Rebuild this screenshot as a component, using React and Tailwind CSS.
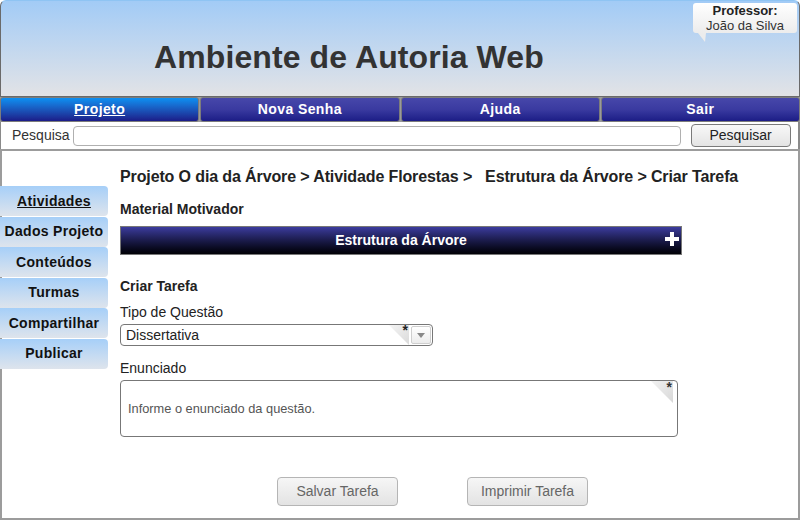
import React from 'react';

const menuTabs = [
  { label: 'Projeto', active: true },
  { label: 'Nova Senha' },
  { label: 'Ajuda' },
  { label: 'Sair' },
];

const sideItems = [
  { label: 'Atividades', active: true },
  { label: 'Dados Projeto' },
  { label: 'Conteúdos' },
  { label: 'Turmas' },
  { label: 'Compartilhar' },
  { label: 'Publicar' },
];

function Requerido() {
  // canto dobrado com asterisco de campo obrigatório
  return (
    <div className="absolute top-0 right-[4px] w-[22px] h-[22px] pointer-events-none">
      <svg width="22" height="22" viewBox="0 0 22 22" className="absolute inset-0">
        <defs>
          <linearGradient id="dobra" x1="0" y1="0" x2="1" y2="1">
            <stop offset="0" stopColor="#f2f2f2" />
            <stop offset="1" stopColor="#d8d8d8" />
          </linearGradient>
        </defs>
        <polygon points="0,0 22,0 22,22" fill="url(#dobra)" />
      </svg>
      <span className="absolute right-[1px] top-[-1px] text-[14px] font-bold text-[#333] leading-none">*</span>
    </div>
  );
}

export default function App() {
  return (
    <div className="w-[800px] h-[520px] bg-white font-['Liberation_Sans',Arial,sans-serif] text-[#222] overflow-hidden">
      {/* cabeçalho */}
      <div className="relative h-[97px] rounded-t-[6px] border border-[#6a6a6a] border-t-[#8fc4f3] bg-gradient-to-b from-[#a2cbf6] to-[#e2e3e6]">
        <h1 className="pl-[153px] pt-[38px] text-[32px] leading-[36px] font-bold text-[#333] tracking-[0.1px]">
          Ambiente de Autoria Web
        </h1>
        <div className="absolute top-[2px] right-[2px] w-[104px] h-[30px] rounded-[3px] bg-gradient-to-b from-white to-[#ececec] text-center text-[13px] leading-[15px]">
          <div className="font-bold">Professor:</div>
          <div className="text-[#333]">João da Silva</div>
          <svg width="8" height="9" viewBox="0 0 8 9" className="absolute left-[5px] top-[30px]">
            <polygon points="0,0 8,0 7,9" fill="#ececec" />
          </svg>
        </div>
      </div>

      {/* menu principal */}
      <div className="flex gap-px h-[25px] bg-[#9a9a9a]">
        {menuTabs.map((t) => (
          <div
            key={t.label}
            className={`flex-1 flex items-center justify-center rounded-[3px] border border-[#7c7c7c] text-white text-[14px] font-bold tracking-[0.4px] ${
              t.active
                ? 'bg-gradient-to-b from-[#0b90f2] to-[#1b1b88] underline'
                : 'bg-gradient-to-b from-[#4747aa] via-[#3a3aa0] to-[#1c1c86]'
            }`}
          >
            {t.label}
          </div>
        ))}
      </div>

      {/* pesquisa */}
      <div className="flex items-center h-[27px] border-l border-r-2 border-[#8a8a8a] bg-white">
        <span className="ml-[11px] text-[14px] text-[#333]">Pesquisa</span>
        <div className="ml-[3px] w-[608px] h-[20px] rounded-[4px] border border-[#b0b0b0] bg-white" />
        <button className="ml-[10px] w-[100px] h-[23px] rounded-[4px] border border-[#7a7a7a] bg-gradient-to-b from-[#f8f8f8] to-[#e4e4e4] text-[14px] text-[#222]">
          Pesquisar
        </button>
      </div>

      {/* área principal */}
      <div className="flex h-[371px] border-2 border-[#9c9c9c]">
        <div className="w-[108px] -ml-[2px] pt-[35px] flex flex-col gap-[0.5px]">
          {sideItems.map((s) => (
            <div
              key={s.label}
              className={`h-[30px] flex items-center justify-center rounded-r-[4px] bg-gradient-to-b from-[#a6cff8] to-[#dee4ec] text-[14px] font-bold text-[#111] tracking-[0.3px] ${
                s.active ? 'underline' : ''
              }`}
            >
              {s.label}
            </div>
          ))}
        </div>

        <div className="flex-1 pl-[12px] pt-[16px]">
          <div className="text-[16px] leading-[20px] font-bold text-[#222] whitespace-pre tracking-[-0.12px]">
            {'Projeto O dia da Árvore > Atividade Florestas >   Estrutura da Árvore > Criar Tarefa'}
          </div>
          <div className="mt-[12px] text-[14px] leading-[20px] font-bold">Material Motivador</div>

          <div className="relative mt-[7px] w-[562px] h-[29px] flex items-center justify-center border border-[#777] bg-gradient-to-b from-[#3c3c9e] to-[#020206] text-white text-[14px] font-bold">
            Estrutura da Árvore
            <svg width="14" height="14" viewBox="0 0 14 14" className="absolute right-[2px] top-[5px]">
              <rect x="5" y="0" width="4" height="14" fill="#fff" />
              <rect x="0" y="5" width="14" height="4" fill="#fff" />
            </svg>
          </div>

          <div className="mt-[21px] text-[14px] leading-[20px] font-bold">Criar Tarefa</div>
          <div className="mt-[6px] text-[14px] leading-[20px] text-[#222]">Tipo de Questão</div>

          <div className="relative mt-[2px] w-[313px] h-[22px] flex items-center rounded-[4px] border border-[#777] bg-white">
            <span className="pl-[5px] text-[14px]">Dissertativa</span>
            <div className="absolute top-0 right-[23px] w-[20px] h-[20px]">
              <svg width="20" height="20" viewBox="0 0 20 20" className="absolute inset-0">
                <defs>
                  <linearGradient id="dobraSel" x1="0" y1="0" x2="1" y2="1">
                    <stop offset="0" stopColor="#f4f4f4" />
                    <stop offset="1" stopColor="#dadada" />
                  </linearGradient>
                </defs>
                <polygon points="0,0 20,0 20,20" fill="url(#dobraSel)" />
              </svg>
              <span className="absolute right-[1px] top-[-2px] text-[14px] font-bold text-[#222] leading-none">*</span>
            </div>
            <div className="absolute right-[1px] top-[1px] w-[20px] h-[18px] rounded-[2px] border border-[#cfcfcf] bg-gradient-to-b from-white to-[#ececec] flex items-center justify-center">
              <svg width="8" height="5" viewBox="0 0 8 5">
                <polygon points="0,0 8,0 4,5" fill="#888" />
              </svg>
            </div>
          </div>

          <div className="mt-[12px] text-[14px] leading-[20px] text-[#222]">Enunciado</div>
          <div className="relative mt-[2px] w-[558px] h-[57px] flex items-center rounded-[4px] border border-[#777] bg-white">
            <span className="pl-[7px] text-[12.8px] text-[#555]">Informe o enunciado da questão.</span>
            <Requerido />
          </div>

          <div className="mt-[40px] ml-[157px] flex gap-[69px]">
            <button className="w-[121px] h-[29px] rounded-[4px] border border-[#b5b5b5] bg-gradient-to-b from-[#f6f6f6] to-[#e3e3e3] text-[14px] text-[#666]">
              Salvar Tarefa
            </button>
            <button className="w-[121px] h-[29px] rounded-[4px] border border-[#b5b5b5] bg-gradient-to-b from-[#f6f6f6] to-[#e3e3e3] text-[14px] text-[#666]">
              Imprimir Tarefa
            </button>
          </div>
        </div>
      </div>
    </div>
  );
}
